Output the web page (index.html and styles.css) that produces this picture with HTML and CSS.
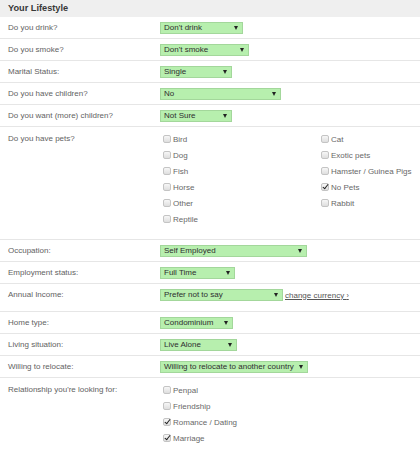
FILE: index.html
```html
<!DOCTYPE html>
<html lang="en">
<head>
<meta charset="utf-8">
<title>Your Lifestyle</title>
<link rel="stylesheet" href="styles.css">
</head>
<body>
<div class="form">
  <div class="head">Your Lifestyle</div>

  <div class="row">
    <div class="label">Do you drink?</div>
    <div class="field"><span class="sel w83">Don't drink<i class="arr"></i></span></div>
  </div>
  <div class="row">
    <div class="label">Do you smoke?</div>
    <div class="field"><span class="sel w89">Don't smoke<i class="arr"></i></span></div>
  </div>
  <div class="row">
    <div class="label">Marital Status:</div>
    <div class="field"><span class="sel w72">Single<i class="arr"></i></span></div>
  </div>
  <div class="row">
    <div class="label">Do you have children?</div>
    <div class="field"><span class="sel w121">No<i class="arr"></i></span></div>
  </div>
  <div class="row">
    <div class="label">Do you want (more) children?</div>
    <div class="field"><span class="sel w72">Not Sure<i class="arr"></i></span></div>
  </div>

  <div class="row list pets">
    <div class="label">Do you have pets?</div>
    <div class="field checks">
      <div class="col">
        <label class="ck"><span class="cb"></span>Bird</label>
        <label class="ck"><span class="cb"></span>Dog</label>
        <label class="ck"><span class="cb"></span>Fish</label>
        <label class="ck"><span class="cb"></span>Horse</label>
        <label class="ck"><span class="cb"></span>Other</label>
        <label class="ck"><span class="cb"></span>Reptile</label>
      </div>
      <div class="col">
        <label class="ck"><span class="cb"></span>Cat</label>
        <label class="ck"><span class="cb"></span>Exotic pets</label>
        <label class="ck"><span class="cb"></span>Hamster / Guinea Pigs</label>
        <label class="ck"><span class="cb on"></span>No Pets</label>
        <label class="ck"><span class="cb"></span>Rabbit</label>
      </div>
    </div>
  </div>

  <div class="row">
    <div class="label">Occupation:</div>
    <div class="field"><span class="sel w147">Self Employed<i class="arr"></i></span></div>
  </div>
  <div class="row">
    <div class="label">Employment status:</div>
    <div class="field"><span class="sel w75">Full Time<i class="arr"></i></span></div>
  </div>
  <div class="row tall">
    <div class="label">Annual Income:</div>
    <div class="field"><span class="sel w123">Prefer not to say<i class="arr"></i></span><a class="link" href="#">change currency <span class="chev">›</span></a></div>
  </div>
  <div class="row">
    <div class="label">Home type:</div>
    <div class="field"><span class="sel w73">Condominium<i class="arr"></i></span></div>
  </div>
  <div class="row">
    <div class="label">Living situation:</div>
    <div class="field"><span class="sel w77">Live Alone<i class="arr"></i></span></div>
  </div>
  <div class="row">
    <div class="label">Willing to relocate:</div>
    <div class="field"><span class="sel w148">Willing to relocate to another country<i class="arr"></i></span></div>
  </div>

  <div class="row list last">
    <div class="label">Relationship you're looking for:</div>
    <div class="field checks">
      <div class="col">
        <label class="ck"><span class="cb"></span>Penpal</label>
        <label class="ck"><span class="cb"></span>Friendship</label>
        <label class="ck"><span class="cb on"></span>Romance / Dating</label>
        <label class="ck"><span class="cb on"></span>Marriage</label>
      </div>
    </div>
  </div>
</div>
</body>
</html>
```

FILE: styles.css
```css
* { box-sizing: border-box; }

html, body {
  margin: 0;
  padding: 0;
  background: #fff;
}

body {
  font-family: "Liberation Sans", Arial, sans-serif;
  font-size: 8px;
  color: #626262;
}

.form {
  width: 420px;
  overflow: hidden;
}

.head {
  height: 17px;
  line-height: 17px;
  padding-left: 8px;
  background: #efefef;
  color: #383838;
  font-weight: bold;
  font-size: 9.2px;
}

.row {
  display: grid;
  grid-template-columns: 152px minmax(0, 1fr);
  align-items: center;
  height: 22px;
  padding-left: 8px;
  border-bottom: 1px solid #e6e6e6;
}

.row.tall {
  height: 28px;
  align-items: start;
  padding-top: 5px;
}

.label {
  line-height: 12px;
  white-space: nowrap;
}

.field {
  display: flex;
  align-items: center;
  min-width: 0;
}

.sel {
  display: inline-flex;
  align-items: center;
  height: 12px;
  padding: 0 4px 0 3px;
  background: #b7efae;
  border: 1px solid #a3d79b;
  color: #2e2e2e;
  white-space: nowrap;
  line-height: 10px;
  flex: none;
}

.arr {
  margin-left: auto;
  width: 0;
  height: 0;
  border-left: 2px solid transparent;
  border-right: 2px solid transparent;
  border-top: 4px solid #222;
}

.w72 { width: 72px; }
.w73 { width: 73px; }
.w75 { width: 75px; }
.w77 { width: 77px; }
.w83 { width: 83px; }
.w89 { width: 89px; }
.w121 { width: 121px; }
.w123 { width: 123px; }
.w147 { width: 147px; }
.w148 { width: 148px; }

.link {
  margin-left: 2px;
  color: #555;
  text-decoration: underline;
  white-space: nowrap;
}

.chev {
  font-size: 7px;
}

.row.list {
  height: auto;
  align-items: start;
  padding-top: 4px;
}

.row.pets {
  padding-bottom: 12px;
}

.row.last {
  border-bottom: none;
}

.row.list .label {
  padding-top: 2px;
}

.checks {
  align-items: flex-start;
  padding-left: 3px;
}

.col {
  display: flex;
  flex-direction: column;
  flex: none;
}

.col:first-child {
  width: 158px;
}

.ck {
  display: flex;
  align-items: center;
  height: 16px;
  white-space: nowrap;
  color: #686868;
}

.cb {
  position: relative;
  width: 8px;
  height: 8px;
  margin-right: 2px;
  border: 1px solid #c4c4c4;
  border-radius: 2px;
  background: linear-gradient(#f7f7f7, #dedede);
  flex: none;
}

.cb.on::after {
  content: "";
  position: absolute;
  left: 2px;
  top: -1px;
  width: 2px;
  height: 5px;
  border: solid #1f1f1f;
  border-width: 0 1.6px 1.6px 0;
  transform: rotate(38deg);
}
```
